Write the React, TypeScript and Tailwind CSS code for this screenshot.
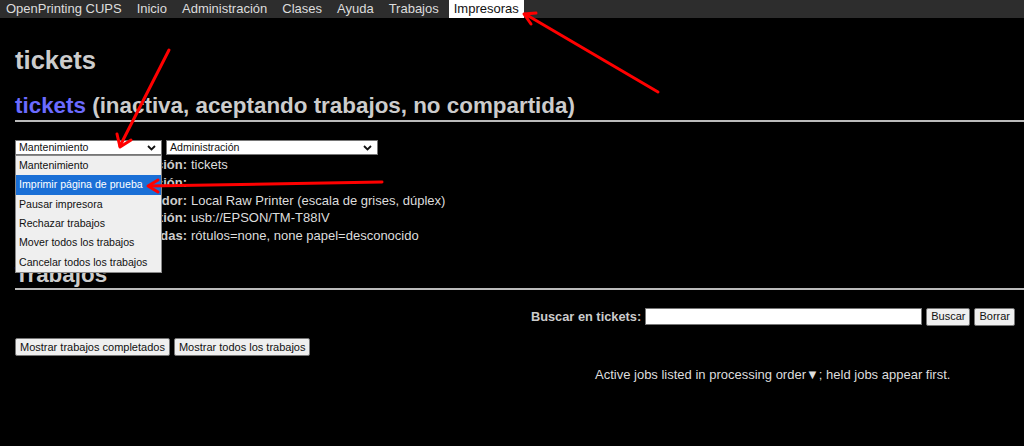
import React from 'react';

const navItems = ['OpenPrinting CUPS', 'Inicio', 'Administración', 'Clases', 'Ayuda', 'Trabajos', 'Impresoras'];

const menuItems = [
  'Mantenimiento',
  'Imprimir página de prueba',
  'Pausar impresora',
  'Rechazar trabajos',
  'Mover todos los trabajos',
  'Cancelar todos los trabajos',
];

const infoRows: [string, string][] = [
  ['Descripción:', 'tickets'],
  ['Ubicación:', ''],
  ['Controlador:', 'Local Raw Printer (escala de grises, dúplex)'],
  ['Conexión:', 'usb://EPSON/TM-T88IV'],
  ['Predeterminadas:', 'rótulos=none, none papel=desconocido'],
];

function Chevron() {
  return (
    <svg width="9" height="6" viewBox="0 0 9 6" className="shrink-0">
      <path d="M1 1 L4.5 4.5 L8 1" fill="none" stroke="#111" strokeWidth="1.8" />
    </svg>
  );
}

function FakeSelect({ label, width }: { label: string; width: string }) {
  return (
    <div className={`${width} h-[15px] bg-white border border-[#767676] flex items-center justify-between pl-[3px] pr-[5px] text-[10.6px] text-[#111] leading-none`}>
      <span>{label}</span>
      <Chevron />
    </div>
  );
}

function Btn({ children }: { children: React.ReactNode }) {
  return (
    <div className="h-[18px] px-[4px] flex items-center bg-[#efefef] border border-[#767676] rounded-[2px] text-[11px] text-[#111] leading-none">
      {children}
    </div>
  );
}

export default function App() {
  return (
    <div
      className="relative w-[1024px] h-[446px] bg-black text-[#dddddd] overflow-hidden"
      style={{ fontFamily: '"Liberation Sans", Arial, sans-serif' }}
    >
      {/* Header */}
      <div className="h-[18px] bg-[#2d2d2d] flex items-stretch gap-[5px] pl-px text-[13px] leading-[18px]">
        {navItems.map((item) => (
          <div
            key={item}
            className={item === 'Impresoras' ? 'px-[5px] bg-white text-[#111]' : 'px-[5px] text-[#dddddd]'}
          >
            {item}
          </div>
        ))}
      </div>

      <div className="px-[15px]">
        <h1 className="mt-[27px] text-[25.6px] font-bold leading-[30px] text-[#cccccc]">tickets</h1>

        <h2 className="mt-[18px] text-[22.4px] font-bold leading-[26px] text-[#cccccc] border-b-2 border-[#bbbbbb] pb-px -mr-[15px]">
          <span className="text-[#6b6bff]">tickets</span> (inactiva, aceptando trabajos, no compartida)
        </h2>

        {/* Selects */}
        <div className="relative mt-[18px] flex gap-[4px]">
          <FakeSelect label="Mantenimiento" width="w-[147px]" />
          <FakeSelect label="Administración" width="w-[212px]" />

          {/* Open dropdown list */}
          <div className="absolute left-0 top-[15px] w-[147px] bg-[#efefef] border border-[#888] z-10 text-[10.6px] text-[#111]">
            {menuItems.map((m, i) => (
              <div
                key={m}
                className={
                  i === 1
                    ? 'h-[19.4px] flex items-center pl-[3px] bg-[#1a6fd6] text-white'
                    : 'h-[19.4px] flex items-center pl-[3px]'
                }
              >
                {m}
              </div>
            ))}
          </div>
        </div>

        {/* Info table */}
        <div className="mt-[1px] grid grid-cols-[172px_1fr] gap-x-[4px] text-[13px] leading-[17.8px]">
          {infoRows.map(([k, v]) => (
            <React.Fragment key={k}>
              <div className="text-right font-bold text-[#cccccc]">{k}</div>
              <div className="text-[#dddddd]">{v}</div>
            </React.Fragment>
          ))}
        </div>

        <h2 className="mt-[18px] text-[22.4px] font-bold leading-[24px] text-[#cccccc] border-b-2 border-[#bbbbbb] pb-px -mr-[15px]">
          Trabajos
        </h2>

        {/* Search */}
        <div className="mt-[17px] flex items-center justify-end gap-[4px] -mr-[6px]">
          <span className="text-[12.8px] font-bold text-[#cccccc]">Buscar en tickets:</span>
          <div className="w-[277px] h-[17px] bg-white border border-[#767676]" />
          <Btn>Buscar</Btn>
          <Btn>Borrar</Btn>
        </div>

        {/* Buttons */}
        <div className="mt-[12px] flex gap-[4px]">
          <Btn>Mostrar trabajos completados</Btn>
          <Btn>Mostrar todos los trabajos</Btn>
        </div>

        <p className="mt-[9px] pl-[580px] text-[13px] text-[#dddddd]">
          Active jobs listed in processing order▼; held jobs appear first.
        </p>
      </div>

      {/* Red annotation arrows */}
      <svg className="absolute inset-0 pointer-events-none z-20" width="1024" height="446" viewBox="0 0 1024 446">
        <g stroke="#ff0000" strokeWidth="3" strokeLinecap="round" strokeLinejoin="round" fill="none">
          <line x1="169" y1="50" x2="120" y2="146" />
          <path d="M117 134 L120 147 L131 140" />
          <line x1="382" y1="182" x2="149" y2="186" />
          <path d="M158 180 L148 186 L158 192" />
          <line x1="658" y1="92" x2="525" y2="14" />
          <path d="M531 24 L524 14 L536 13" />
        </g>
      </svg>
    </div>
  );
}
